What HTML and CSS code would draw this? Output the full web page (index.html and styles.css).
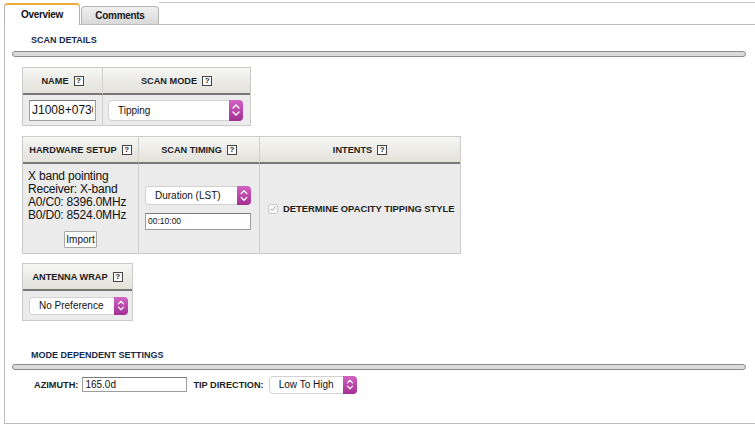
FILE: index.html
```html
<!DOCTYPE html>
<html>
<head>
<meta charset="utf-8">
<title>Scan</title>
<link rel="stylesheet" href="styles.css">
</head>
<body>
<div class="tabbar">
  <div class="tab tab-active">Overview</div>
  <div class="tab tab-idle">Comments</div>
  <div class="tab-fill"></div>
</div>
<div class="panel">
  <h2 class="sec-title">SCAN DETAILS</h2>
  <div class="rule"></div>

  <div class="box box-name">
    <div class="hc">NAME <span class="help">?</span></div>
    <div class="hc hc-div">SCAN MODE <span class="help">?</span></div>
    <div class="bc bc-center"><input class="txt txt-name" value="J1008+0730"></div>
    <div class="bc bc-div bc-mode">
      <div class="sel sel-mode"><span class="sel-text">Tipping</span><span class="step"><svg viewBox="0 0 14 20" width="14" height="20"><path d="M4 8 L7 5 L10 8 M4 12 L7 15 L10 12" fill="none" stroke="#fff" stroke-width="1.4" stroke-linecap="round" stroke-linejoin="round"/></svg></span></div>
    </div>
  </div>

  <div class="box box-hw">
    <div class="hc">HARDWARE SETUP <span class="help">?</span></div>
    <div class="hc hc-div">SCAN TIMING <span class="help">?</span></div>
    <div class="hc hc-div">INTENTS <span class="help">?</span></div>
    <div class="bc bc-hw">
      <div class="hw-text">X band pointing<br>Receiver: X-band<br>A0/C0: 8396.0MHz<br>B0/D0: 8524.0MHz</div>
      <div class="hw-btn-row"><button class="btn">Import</button></div>
    </div>
    <div class="bc bc-div bc-timing">
      <div class="sel sel-dur"><span class="sel-text">Duration (LST)</span><span class="step"><svg viewBox="0 0 14 20" width="14" height="19"><path d="M4 8 L7 5 L10 8 M4 12 L7 15 L10 12" fill="none" stroke="#fff" stroke-width="1.4" stroke-linecap="round" stroke-linejoin="round"/></svg></span></div>
      <input class="txt txt-time" value="00:10:00">
    </div>
    <div class="bc bc-div bc-intent">
      <span class="chk"><svg viewBox="0 0 9 9" width="9" height="9"><path d="M2 4.8 L3.8 6.6 L7.2 2.2" fill="none" stroke="#a8a8a8" stroke-width="1.1"/></svg></span>
      <span class="chk-label">DETERMINE OPACITY TIPPING STYLE</span>
    </div>
  </div>

  <div class="box box-wrap">
    <div class="hc">ANTENNA WRAP <span class="help">?</span></div>
    <div class="bc bc-wrap">
      <div class="sel sel-wrap"><span class="sel-text">No Preference</span><span class="step"><svg viewBox="0 0 14 20" width="14" height="17"><path d="M4 8 L7 5 L10 8 M4 12 L7 15 L10 12" fill="none" stroke="#fff" stroke-width="1.4" stroke-linecap="round" stroke-linejoin="round"/></svg></span></div>
    </div>
  </div>

  <h2 class="sec-title sec-title-2">MODE DEPENDENT SETTINGS</h2>
  <div class="rule rule-2"></div>

  <div class="mode-row">
    <span class="lbl">AZIMUTH:</span>
    <input class="txt txt-az" value="165.0d">
    <span class="lbl lbl-tip">TIP DIRECTION:</span>
    <div class="sel sel-tip"><span class="sel-text">Low To High</span><span class="step"><svg viewBox="0 0 14 20" width="14" height="17"><path d="M4 8 L7 5 L10 8 M4 12 L7 15 L10 12" fill="none" stroke="#fff" stroke-width="1.4" stroke-linecap="round" stroke-linejoin="round"/></svg></span></div>
  </div>
</div>
</body>
</html>
```

FILE: styles.css
```css
* { box-sizing: border-box; }

html, body {
  margin: 0;
  padding: 0;
  background: #fff;
  font-family: "Liberation Sans", Arial, Helvetica, sans-serif;
  color: #111;
}

.tabbar {
  display: flex;
  align-items: flex-end;
  height: 22px;
  margin: 2px 0 0 4px;
}

.tab {
  font-size: 10px;
  font-weight: bold;
  letter-spacing: -0.3px;
  display: flex;
  align-items: center;
  justify-content: center;
  border: 1px solid #b4b4b4;
  border-bottom: none;
  border-radius: 4px 4px 0 0;
}

.tab-active {
  position: relative;
  z-index: 2;
  width: 76px;
  height: 22px;
  margin-bottom: -1px;
  background: #fff;
  border-top: 2px solid #f2a93b;
  padding-bottom: 1px;
}

.tab-idle {
  width: 78px;
  height: 18px;
  margin-left: 1px;
  background: linear-gradient(#f0f0f0, #d9d9d9);
  color: #1a1a1a;
}

.tab-fill {
  flex: 1;
  align-self: flex-start;
  border-top: 1px solid #c4c4c4;
}

.panel {
  margin-left: 4px;
  height: 400px;
  border-top: 1px solid #bdbdbd;
  border-left: 1px solid #bdbdbd;
  border-bottom: 1px solid #bdbdbd;
  padding-top: 9px;
}

.sec-title {
  margin: 0 0 0 26px;
  font-size: 9px;
  line-height: 12px;
  font-weight: bold;
  color: #152a4e;
}

.sec-title-2 {
  margin-top: 28px;
}

.rule {
  margin: 5px 0 0 7px;
  width: 734px;
  height: 6px;
  border: 1px solid #8c8c8c;
  border-radius: 3px;
  background: #dcdcdc;
}

.rule-2 {
  margin-top: 3px;
}

.box {
  display: grid;
  margin-left: 17px;
  width: fit-content;
  border: 1px solid #cacaca;
  background: #ebebeb;
}

.box-name { margin-top: 10px; grid-template-columns: 79px 148px; }
.box-hw { margin-top: 10px; grid-template-columns: 115px 121px 201px; }
.box-wrap { margin-top: 9px; grid-template-columns: 109px; }

.hc {
  height: 27px;
  display: flex;
  align-items: center;
  justify-content: center;
  gap: 5px;
  font-size: 9.2px;
  font-weight: bold;
  color: #1e1e1e;
  background: linear-gradient(#f6f6f4, #e2e1da);
  border-bottom: 2px solid #777;
}

.hc-div, .bc-div { border-left: 1px solid #cfcfcf; }

.help {
  display: inline-flex;
  align-items: center;
  justify-content: center;
  width: 10px;
  height: 10px;
  border: 1px solid #444;
  background: #fff;
  font-size: 8px;
  line-height: 8px;
  font-weight: bold;
}

.bc {
  height: 30px;
  display: flex;
  align-items: center;
  background: #ebebeb;
}

.bc-center { justify-content: center; }
.bc-mode { padding-left: 5px; }

.txt {
  font-family: "Liberation Sans", Arial, sans-serif;
  border: 1px solid #9e9e9e;
  border-top-color: #7c7c7c;
  background: #fff;
  color: #111;
  padding: 0 2px;
  margin: 0;
  outline: none;
}

.txt-name {
  width: 67px;
  height: 21px;
  font-size: 12px;
}

.sel {
  display: flex;
  align-items: stretch;
  background: #fff;
  border: 1px solid #d2d2d2;
  border-radius: 4px;
  font-size: 10px;
  color: #111;
}

.sel-text {
  flex: 1;
  display: flex;
  align-items: center;
  padding-left: 9px;
  white-space: nowrap;
}

.step {
  width: 14px;
  display: flex;
  align-items: center;
  justify-content: center;
  margin: -1px -1px -1px 0;
  border-radius: 0 4px 4px 0;
  background: linear-gradient(#d262c4, #a32f93);
}

.step svg { display: block; }

.sel-mode { width: 135px; height: 21px; }

.box-hw .bc { height: 89px; }

.bc-hw {
  flex-direction: column;
  align-items: stretch;
  justify-content: center;
  padding: 0 0 0 5px;
}

.hw-text {
  font-size: 12px;
  line-height: 13px;
  letter-spacing: -0.2px;
  color: #111;
}

.hw-btn-row {
  display: flex;
  justify-content: center;
  padding-right: 5px;
  margin-top: 9px;
}

.btn {
  font-family: "Liberation Sans", Arial, sans-serif;
  font-size: 10px;
  height: 17px;
  width: 33px;
  padding: 0;
  background: #fff;
  border: 1px solid #a8a8a8;
  border-radius: 1px;
  color: #111;
}

.bc-timing {
  flex-direction: column;
  align-items: flex-start;
  justify-content: center;
  gap: 8px;
  padding: 0 0 2px 6px;
}

.sel-dur { width: 106px; height: 19px; }

.txt-time {
  width: 106px;
  height: 17px;
  font-size: 8.5px;
}

.bc-intent {
  padding-left: 8px;
  gap: 5px;
}

.chk {
  width: 10px;
  height: 10px;
  border: 1px solid #cdcdcd;
  border-radius: 2px;
  background: #f5f5f5;
  display: flex;
  align-items: center;
  justify-content: center;
}

.chk svg { display: block; }

.chk-label {
  font-size: 9.4px;
  font-weight: bold;
  color: #1e1e1e;
}

.box-wrap .bc { height: 29px; }

.bc-wrap { padding-left: 6px; }

.sel-wrap { width: 99px; height: 18px; }

.mode-row {
  display: flex;
  align-items: center;
  margin: 6px 0 0 29px;
  height: 17px;
}

.lbl {
  font-size: 9.2px;
  font-weight: bold;
  color: #1e1e1e;
}

.txt-az {
  margin-left: 4px;
  width: 105px;
  height: 15px;
  font-size: 10px;
}

.lbl-tip { margin-left: 6px; }

.sel-tip {
  margin-left: 5px;
  width: 88px;
  height: 18px;
}
```
